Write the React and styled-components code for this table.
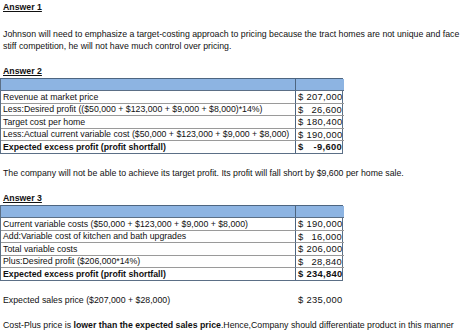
import React from "react";
import styled, { createGlobalStyle } from "styled-components";

const Global = createGlobalStyle`
  html, body { margin: 0; padding: 0; background: #fff; }
  body {
    font-family: "Liberation Sans", Arial, sans-serif;
    font-size: 8.75px;
    line-height: 12.5px;
    color: #111;
  }
`;

const Page = styled.div`
  width: 474px;
  height: 332px;
  overflow: hidden;
  padding-top: 1px;
  box-sizing: border-box;
`;

const Heading = styled.div`
  padding-left: 3px;
  font-weight: bold;
  text-decoration: underline;
  margin-top: ${(p) => p.$mt || 0}px;
`;

const Para = styled.p`
  margin: ${(p) => p.$mt || 0}px 0 0 0;
  padding-left: 3px;
  width: 466px;
`;

const Table = styled.div`
  display: grid;
  grid-template-columns: 295px 48px;
  width: 343px;
  box-sizing: border-box;
  border: 1px solid #5b6f86;
  border-top-color: #4d6580;
`;

const HeadCell = styled.div`
  height: 11px;
  background: #8db4e2;
  border-bottom: 1px solid #5b6f86;
  border-right: ${(p) => (p.$first ? "1px solid #4d6580" : "none")};
`;

const LabelCell = styled.div`
  height: ${(p) => p.$h}px;
  line-height: ${(p) => p.$h}px;
  padding-left: 2px;
  border-right: 1px solid #4d6580;
  border-bottom: ${(p) => (p.$last ? "none" : "1px solid #9a9a9a")};
  font-weight: ${(p) => (p.$bold ? "bold" : "normal")};
  white-space: nowrap;
  overflow: hidden;
`;

const Money = styled.div`
  display: flex;
  justify-content: space-between;
  gap: 3px;
  font-size: 9.4px;
  letter-spacing: 0.3px;
  white-space: nowrap;
`;

const ValueCell = styled(Money)`
  height: ${(p) => p.$h}px;
  line-height: ${(p) => p.$h}px;
  padding: 0 2px 0 2px;
  border-bottom: ${(p) => (p.$last ? "none" : "1px solid #9a9a9a")};
  font-weight: ${(p) => (p.$bold ? "bold" : "normal")};
`;

const PlainRow = styled.div`
  display: grid;
  grid-template-columns: 298px max-content;
  margin-top: ${(p) => p.$mt || 0}px;
`;

const PlainLabel = styled.div`
  padding-left: 3px;
`;

const PlainValue = styled(Money)``;

const heights = [12, 11, 12, 11, 12];

function DataTable({ rows }) {
  return (
    <Table>
      <HeadCell $first />
      <HeadCell />
      {rows.map((r, i) => {
        const last = i === rows.length - 1;
        return (
          <React.Fragment key={i}>
            <LabelCell $h={heights[i]} $last={last} $bold={r.bold}>
              {r.label}
            </LabelCell>
            <ValueCell $h={heights[i]} $last={last} $bold={r.bold}>
              <span>$</span>
              <span>{r.value}</span>
            </ValueCell>
          </React.Fragment>
        );
      })}
    </Table>
  );
}

const table1 = [
  { label: "Revenue at market price", value: "207,000" },
  {
    label: "Less:Desired profit (($50,000 + $123,000 + $9,000 + $8,000)*14%)",
    value: "26,600",
  },
  { label: "Target cost per home", value: "180,400" },
  {
    label:
      "Less:Actual current variable cost ($50,000 + $123,000 + $9,000 + $8,000)",
    value: "190,000",
  },
  { label: "Expected excess profit (profit shortfall)", value: "-9,600", bold: true },
];

const table2 = [
  {
    label: "Current variable costs ($50,000 + $123,000 + $9,000 + $8,000)",
    value: "190,000",
  },
  { label: "Add:Variable cost of kitchen and bath upgrades", value: "16,000" },
  { label: "Total variable costs", value: "206,000" },
  { label: "Plus:Desired profit ($206,000*14%)", value: "28,840" },
  { label: "Expected excess profit (profit shortfall)", value: "234,840", bold: true },
];

export default function App() {
  return (
    <Page>
      <Global />
      <Heading>Answer 1</Heading>
      <Para $mt={14}>
        Johnson will need to emphasize a target-costing approach to pricing
        because the tract homes are not unique and face stiff competition, he
        will not have much control over pricing.
      </Para>
      <Heading $mt={12.5}>Answer 2</Heading>
      <DataTable rows={table1} />
      <Para $mt={13.5}>
        The company will not be able to achieve its target profit. Its profit
        will fall short by $9,600 per home sale.
      </Para>
      <Heading $mt={12.5}>Answer 3</Heading>
      <DataTable rows={table2} />
      <PlainRow $mt={13}>
        <PlainLabel>Expected sales price ($207,000 + $28,000)</PlainLabel>
        <PlainValue>
          <span>$</span>
          <span>235,000</span>
        </PlainValue>
      </PlainRow>
      <Para $mt={12.5}>
        Cost-Plus price is <b>lower than the expected sales price</b>
        .Hence,Company should differentiate product in this manner
      </Para>
    </Page>
  );
}
